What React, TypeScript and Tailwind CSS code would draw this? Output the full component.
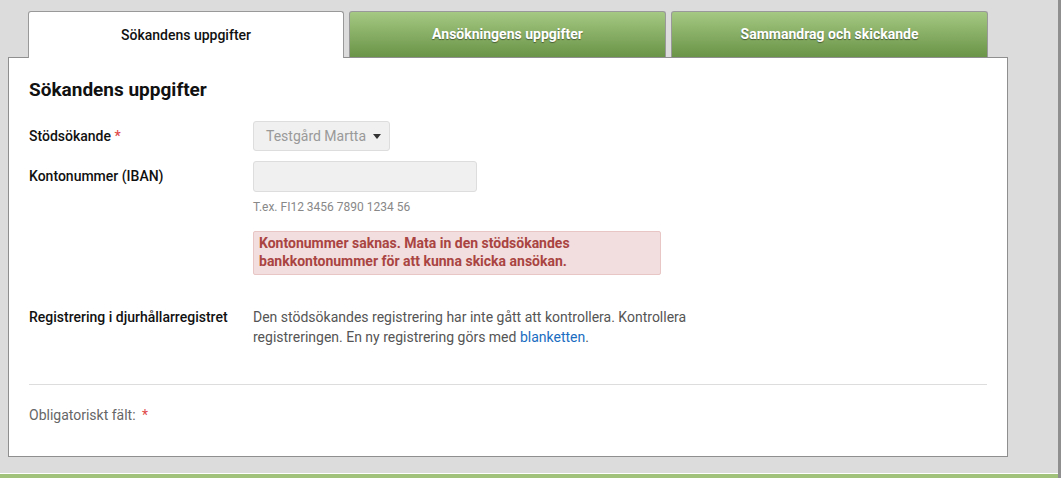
import React from "react";

export default function App() {
  return (
    <div className="w-[1061px] h-[478px] bg-[#dcdcdc] flex overflow-hidden font-['Roboto',sans-serif]">
      <div className="flex-1 flex flex-col">
        <div className="flex-1 pl-2 pt-[11px]">
          <div className="flex gap-[5px] pl-[20px] h-[46px]">
            <div className="relative z-10 w-[316px] h-[47px] bg-white border border-b-0 border-[#999] rounded-t-[3px] flex items-center justify-center text-[14px] font-medium text-[#111]">
              Sökandens uppgifter
            </div>
            <div className="w-[317px] h-[46px] bg-gradient-to-b from-[#a5c882] to-[#6a9447] border border-b-0 border-[#999] rounded-t-[3px] flex items-center justify-center text-[14px] font-bold text-white [text-shadow:0_1px_1px_rgba(0,0,0,0.45)]">
              Ansökningens uppgifter
            </div>
            <div className="w-[317px] h-[46px] bg-gradient-to-b from-[#a5c882] to-[#6a9447] border border-b-0 border-[#999] rounded-t-[3px] flex items-center justify-center text-[14px] font-bold text-white [text-shadow:0_1px_1px_rgba(0,0,0,0.45)]">
              Sammandrag och skickande
            </div>
          </div>
          <div className="w-[1000px] h-[400px] bg-white border border-[#8f8f8f] px-5 pt-[20px]">
            <h1 className="text-[19px] font-bold text-[#111] leading-[24px]">Sökandens uppgifter</h1>
            <div className="flex mt-[19px]">
              <div className="w-[224px] text-[14px] font-medium text-[#111] leading-[20px] pt-[5px]">
                Stödsökande <span className="text-[#e04a4a]">*</span>
              </div>
              <div className="h-[30px] pl-3 pr-[8px] bg-[#f0f0f0] border border-[#ddd] rounded-[3px] flex items-center gap-[7px] text-[14px] text-[#999]">
                Testgård Martta
                <span className="w-0 h-0 border-l-[4px] border-r-[4px] border-t-[5px] border-l-transparent border-r-transparent border-t-[#333]" />
              </div>
            </div>
            <div className="flex mt-[10px]">
              <div className="w-[224px] text-[14px] font-medium text-[#111] leading-[20px] pt-[5px]">
                Kontonummer (IBAN)
              </div>
              <div className="flex flex-col">
                <div className="w-[224px] h-[31px] bg-[#f0f0f0] border border-[#ddd] rounded-[3px]" />
                <div className="text-[12px] text-[#888] mt-[7px] leading-[16px]">T.ex. FI12 3456 7890 1234 56</div>
                <div className="mt-[16px] w-[408px] bg-[#f2dede] border border-[#e8c6c6] rounded-[2px] pl-[5px] pt-[2px] pb-[4px] text-[14px] font-bold text-[#a94442] leading-[18px]">
                  Kontonummer saknas. Mata in den stödsökandes<br />bankkontonummer för att kunna skicka ansökan.
                </div>
              </div>
            </div>
            <div className="flex mt-[32px]">
              <div className="w-[224px] text-[14px] font-medium text-[#111] leading-[20px]">
                Registrering i djurhållarregistret
              </div>
              <div className="w-[450px] text-[14px] text-[#555] leading-[20px]">
                Den stödsökandes registrering har inte gått att kontrollera. Kontrollera registreringen. En ny registrering görs med{" "}
                <span className="text-[#1a6dc1]">blanketten</span>.
              </div>
            </div>
            <div className="mt-[37px] h-px bg-[#ddd] w-[958px]" />
            <div className="mt-[20px] text-[14px] text-[#666] leading-[20px]">
              Obligatoriskt fält: <span className="text-[#e04a4a] ml-[3px]">*</span>
            </div>
          </div>
        </div>
        <div className="h-px bg-white" />
        <div className="h-[4px] bg-[#a0c27a]" />
      </div>
      <div className="w-[3px] bg-[#8f8f8f]" />
    </div>
  );
}
